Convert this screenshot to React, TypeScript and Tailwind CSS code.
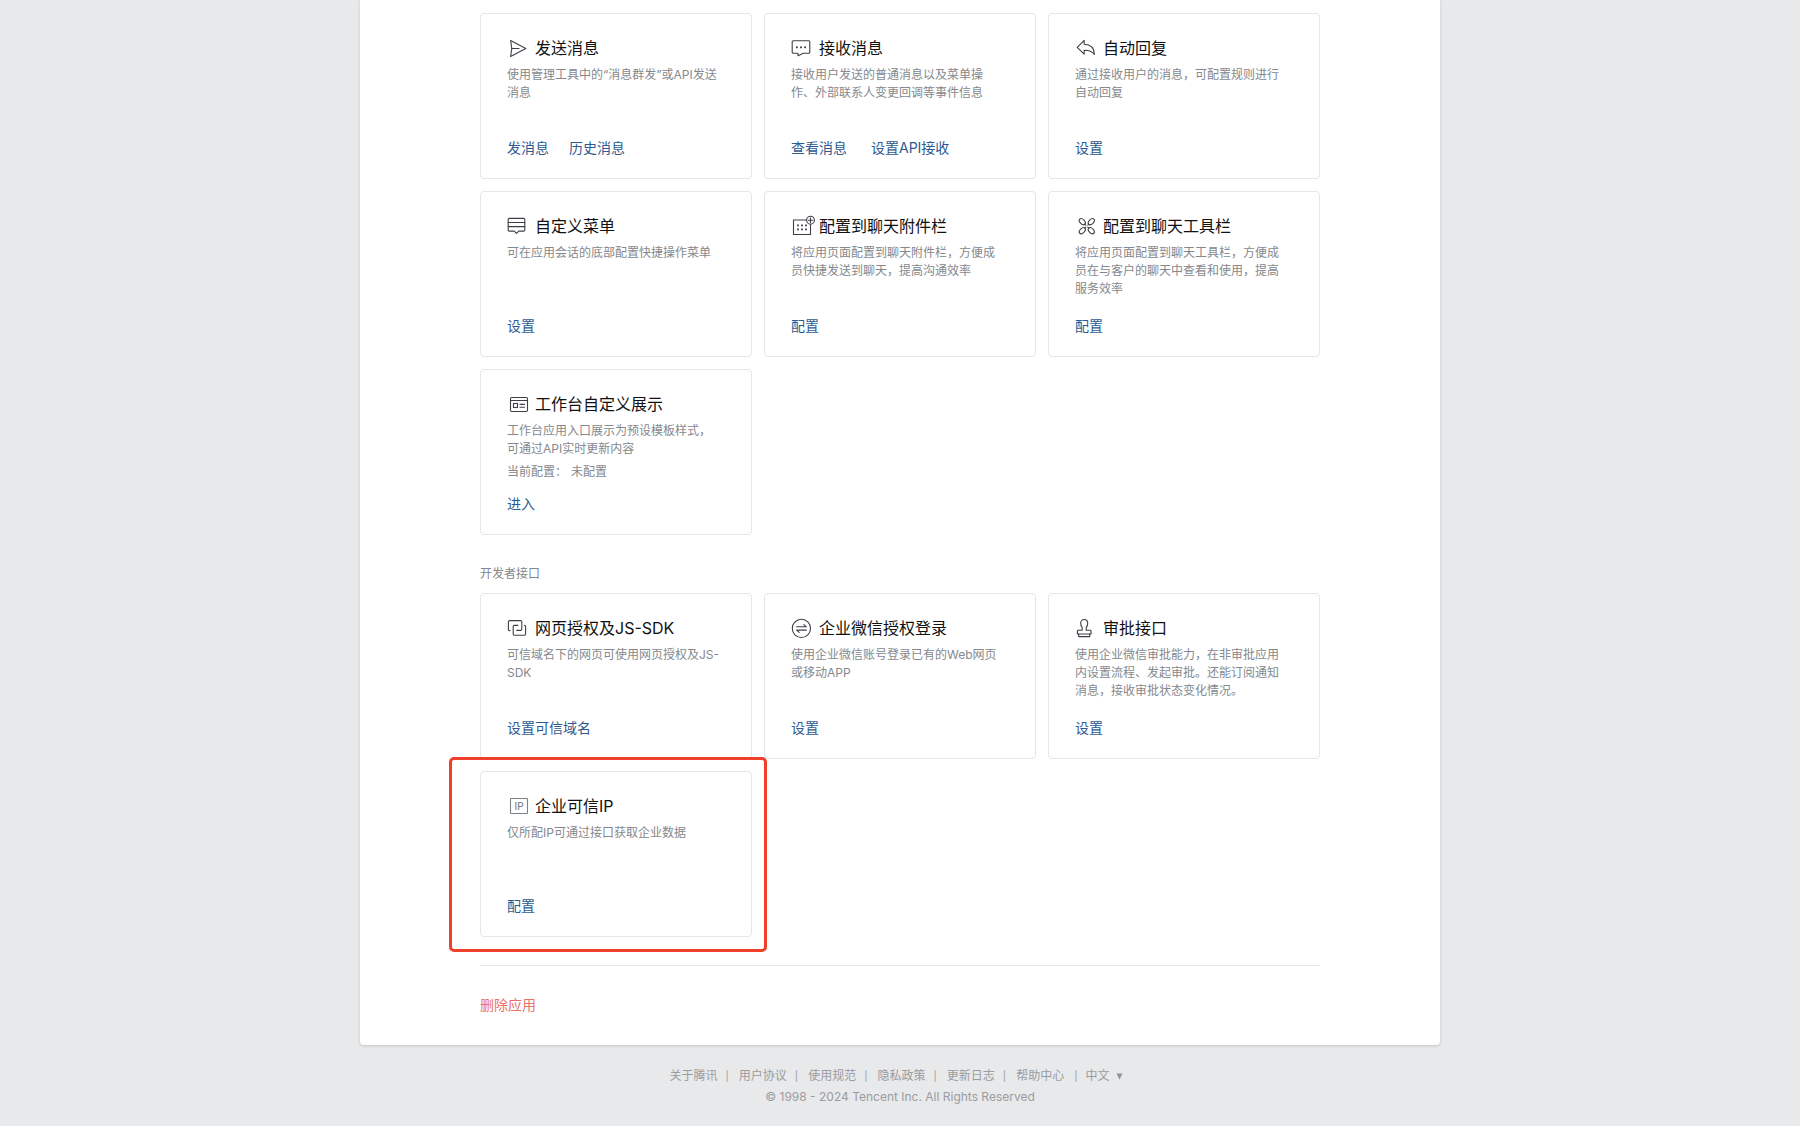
import type { ReactNode } from "react";

type Card = {
  title: string;
  desc: string;
  status?: [string, string];
  links: string[];
  icon: ReactNode;
  wideGap?: boolean;
  highlighted?: boolean;
};

function Icon({ children }: { children: ReactNode }) {
  return (
    <svg
      width="24"
      height="24"
      viewBox="0 0 24 24"
      fill="none"
      stroke="#3d4047"
      strokeWidth="1.1"
      strokeLinejoin="round"
      strokeLinecap="round"
      className="shrink-0 overflow-visible"
      aria-hidden="true"
    >
      {children}
    </svg>
  );
}

const sendIcon = (
  <Icon>
    <path d="M3.6 4.5 18.8 12.5 3.6 20.5 4.8 12.5Z" />
    <path d="M4.8 12.5H12" />
  </Icon>
);

const chatIcon = (
  <Icon>
    <path d="M2.2 4.8H17.8Q18.8 4.8 18.8 5.8V16.2Q18.8 17.2 17.8 17.2H12.4L7 19.8V17.2H2.2Q1.2 17.2 1.2 16.2V5.8Q1.2 4.8 2.2 4.8Z" />
    <g fill="#3d4047" stroke="none">
      <rect x="5" y="10.4" width="1.8" height="1.8" />
      <rect x="9.1" y="10.4" width="1.8" height="1.8" />
      <rect x="13.2" y="10.4" width="1.8" height="1.8" />
    </g>
  </Icon>
);

const replyIcon = (
  <Icon>
    <path d="M2.2 11.3 9.2 4.4V8.2C15.4 8.4 19.2 11.8 19.4 18.4C16.8 15.2 13.6 14.2 9.2 14.3V18.2Z" />
  </Icon>
);

const menuIcon = (
  <Icon>
    <path d="M2.4 4.4H16.6Q17.8 4.4 17.8 5.6V15.9Q17.8 17.1 16.6 17.1H11.8L9.5 19.4 7.2 17.1H2.4Q1.2 17.1 1.2 15.9V5.6Q1.2 4.4 2.4 4.4Z" />
    <path d="M1.2 8.5H17.8M1.2 12.6H17.8" />
  </Icon>
);

const attachIcon = (
  <Icon>
    <path d="M15 6H2.5V20.5H19.5V10.6" strokeLinejoin="miter" />
    <circle cx="19.5" cy="6.2" r="3.9" />
    <path d="M17.3 6.2H21.7M19.5 4V8.4" />
    <g fill="#3d4047" stroke="none">
      <rect x="6.1" y="10.5" width="1.8" height="1.8" />
      <rect x="10.1" y="10.5" width="1.8" height="1.8" />
      <rect x="14.1" y="10.5" width="1.8" height="1.8" />
      <rect x="6.1" y="14.5" width="1.8" height="1.8" />
      <rect x="10.1" y="14.5" width="1.8" height="1.8" />
      <rect x="14.1" y="14.5" width="1.8" height="1.8" />
    </g>
  </Icon>
);

const toolsIcon = (
  <Icon>
    <ellipse cx="7.3" cy="7.7" rx="3.6" ry="2.3" transform="rotate(45 7.3 7.7)" />
    <ellipse cx="16.3" cy="7.7" rx="3.6" ry="2.3" transform="rotate(-45 16.3 7.7)" />
    <ellipse cx="7.3" cy="16.7" rx="3.6" ry="2.3" transform="rotate(-45 7.3 16.7)" />
    <ellipse cx="16.3" cy="16.7" rx="3.6" ry="2.3" transform="rotate(45 16.3 16.7)" />
    <path d="M9.8 10.2 10.8 11.2M13.8 10.2 12.8 11.2M9.8 14.2 10.8 13.2M13.8 14.2 12.8 13.2" />
  </Icon>
);

const workbenchIcon = (
  <Icon>
    <rect x="3.5" y="5.5" width="17" height="14" rx="1.2" />
    <path d="M3.5 8.5H20.5M13 12.4H17.5M13 15.3H17.5" />
    <rect x="6.5" y="11.5" width="4" height="4" strokeLinejoin="miter" />
  </Icon>
);

const webIcon = (
  <Icon>
    <path d="M3 14.6H2.5Q1.4 14.6 1.4 13.4V5.8Q1.4 4.6 2.6 4.6H13.6Q14.8 4.6 14.8 5.8V13.2Q14.8 14.4 13.6 14.4H9.8" />
    <path d="M10.8 9.4H7.4Q6.2 9.4 6.2 10.6V18Q6.2 19.2 7.4 19.2H17.4Q18.6 19.2 18.6 18V10.6Q18.6 9.4 17.6 9.4" />
  </Icon>
);

const loginIcon = (
  <Icon>
    <circle cx="10.4" cy="12.4" r="9.1" />
    <path d="M5.6 10.8H15.4L12.8 8.6M15.4 14.1H5.6L8.2 16.3" />
  </Icon>
);

const stampIcon = (
  <Icon>
    <path d="M7.2 14.2V11.6C6.2 10.4 5.7 8.8 5.7 7.2C5.7 5 7.2 3.5 9.2 3.5S12.7 5 12.7 7.2C12.7 8.8 12.2 10.4 11.2 11.6V14.2H15.2Q16 14.2 16 15V18H2.4V15Q2.4 14.2 3.2 14.2Z" />
    <path d="M3.7 18V20.6H14.7V18" />
  </Icon>
);

const ipIcon = (
  <Icon>
    <rect x="3.5" y="4.5" width="17" height="15" rx="0.5" stroke="#7d8187" />
    <text
      x="12"
      y="15.6"
      textAnchor="middle"
      fontSize="10"
      fontFamily="Inter, sans-serif"
      fill="#6b6f75"
      stroke="none"
    >
      IP
    </text>
  </Icon>
);

const appCards: Card[] = [
  {
    title: "发送消息",
    desc: "使用管理工具中的“消息群发”或API发送消息",
    links: ["发消息", "历史消息"],
    icon: sendIcon,
  },
  {
    title: "接收消息",
    desc: "接收用户发送的普通消息以及菜单操作、外部联系人变更回调等事件信息",
    links: ["查看消息", "设置API接收"],
    icon: chatIcon,
    wideGap: true,
  },
  {
    title: "自动回复",
    desc: "通过接收用户的消息，可配置规则进行自动回复",
    links: ["设置"],
    icon: replyIcon,
  },
  {
    title: "自定义菜单",
    desc: "可在应用会话的底部配置快捷操作菜单",
    links: ["设置"],
    icon: menuIcon,
  },
  {
    title: "配置到聊天附件栏",
    desc: "将应用页面配置到聊天附件栏，方便成员快捷发送到聊天，提高沟通效率",
    links: ["配置"],
    icon: attachIcon,
  },
  {
    title: "配置到聊天工具栏",
    desc: "将应用页面配置到聊天工具栏，方便成员在与客户的聊天中查看和使用，提高服务效率",
    links: ["配置"],
    icon: toolsIcon,
  },
  {
    title: "工作台自定义展示",
    desc: "工作台应用入口展示为预设模板样式，可通过API实时更新内容",
    status: ["当前配置：", "未配置"],
    links: ["进入"],
    icon: workbenchIcon,
  },
];

const devCards: Card[] = [
  {
    title: "网页授权及JS-SDK",
    desc: "可信域名下的网页可使用网页授权及JS-SDK",
    links: ["设置可信域名"],
    icon: webIcon,
  },
  {
    title: "企业微信授权登录",
    desc: "使用企业微信账号登录已有的Web网页或移动APP",
    links: ["设置"],
    icon: loginIcon,
  },
  {
    title: "审批接口",
    desc: "使用企业微信审批能力，在非审批应用内设置流程、发起审批。还能订阅通知消息，接收审批状态变化情况。",
    links: ["设置"],
    icon: stampIcon,
  },
  {
    title: "企业可信IP",
    desc: "仅所配IP可通过接口获取企业数据",
    links: ["配置"],
    icon: ipIcon,
    highlighted: true,
  },
];

const footerLinks = ["关于腾讯", "用户协议", "使用规范", "隐私政策", "更新日志", "帮助中心"];

function FeatureCard({ card }: { card: Card }) {
  return (
    <article className="relative flex min-h-[166px] flex-col rounded-[4px] border border-[#e4e6e9] pt-[22px] pr-[30px] pb-5 pl-[26px]">
      <h3 className="flex items-center gap-1 text-base leading-6 text-[#111]">
        {card.icon}
        {card.title}
      </h3>
      <p className="mt-1.5 text-xs leading-[18px] text-[#85888c]">{card.desc}</p>
      {card.status && (
        <p className="mt-[5px] flex gap-1 text-xs leading-[18px] text-[#85888c]">
          <span>{card.status[0]}</span>
          <span>{card.status[1]}</span>
        </p>
      )}
      <div
        className={
          "mt-auto flex text-sm leading-5 text-[#2e5a8f] " + (card.wideGap ? "gap-6" : "gap-5")
        }
      >
        {card.links.map((link) => (
          <a key={link} href="#" className="hover:underline">
            {link}
          </a>
        ))}
      </div>
      {card.highlighted && (
        <div className="pointer-events-none absolute -top-[15px] -right-4 -bottom-4 -left-8 z-10 rounded-[5px] border-3 border-[#ee402a]" />
      )}
    </article>
  );
}

export default function App() {
  return (
    <div
      lang="zh-CN"
      className="min-h-screen bg-[#e8e9eb] font-['Inter','Noto_Sans_CJK_SC',sans-serif]"
    >
      <main className="mx-auto w-full max-w-[1080px] rounded-b-[4px] bg-white px-[120px] pt-[13px] pb-[30px] shadow-[0_1px_3px_rgba(0,0,0,0.16)]">
        <section className="grid grid-cols-3 gap-3">
          {appCards.map((card) => (
            <FeatureCard key={card.title} card={card} />
          ))}
        </section>
        <h2 className="mt-[30px] mb-2.5 text-xs leading-[18px] text-[#85888c]">开发者接口</h2>
        <section className="grid grid-cols-3 gap-3">
          {devCards.map((card) => (
            <FeatureCard key={card.title} card={card} />
          ))}
        </section>
        <hr className="mt-7 border-[#e4e6e9]" />
        <button type="button" className="mt-[29px] block text-sm leading-5 text-[#e8716b]">
          删除应用
        </button>
      </main>
      <footer className="pt-5 pb-4 text-center text-xs text-[#9a9c9f]">
        <nav className="flex items-center justify-center leading-[22px]">
          {footerLinks.map((link) => (
            <span key={link} className="flex">
              <a href="#">{link}</a>
              <span
                className={
                  "text-[10px] leading-[22px] " +
                  (link === "帮助中心" ? "mr-2 ml-2.5" : "mr-2.5 ml-2")
                }
              >
                |
              </span>
            </span>
          ))}
          <button type="button" className="flex items-center gap-1.5 pr-2">
            中文
            <svg width="7" height="7" viewBox="0 0 7 7" fill="#8f9194" aria-hidden="true">
              <path d="M0.5 0.5H6.5L3.5 6.5Z" />
            </svg>
          </button>
        </nav>
        <p className="leading-5">© 1998 - 2024 Tencent Inc. All Rights Reserved</p>
      </footer>
    </div>
  );
}
